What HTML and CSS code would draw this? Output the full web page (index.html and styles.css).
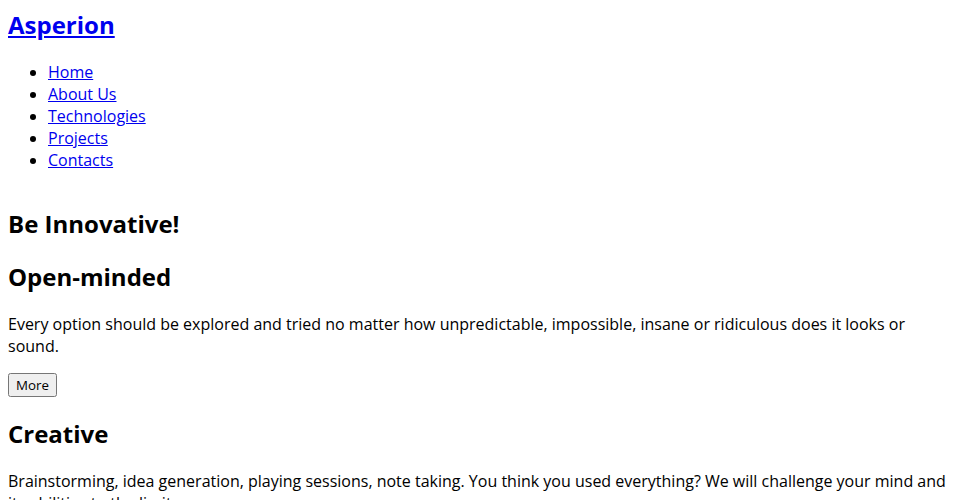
FILE: index.html
```html
<!DOCTYPE html>
<html lang="en">
<head>
    <meta charset="UTF-8">
    <meta name="viewport" content="width=device-width, initial-scale=1.0">
    <title>Asperion</title>
    <link rel="stylesheet" href="styles.css">
</head>
<body>
    <header class="header">
        <h1 class="logo"><a href="#">Asperion</a></h1>
        <nav class="nav">
            <ul>
                <li><a href="#">Home</a></li>
                <li><a href="#">About Us</a></li>
                <li><a href="#">Technologies</a></li>
                <li><a href="#">Projects</a></li>
                <li><a href="#">Contacts</a></li>
            </ul>
        </nav>
    </header>

    <main class="content">
        <h2 class="motto">Be Innovative!</h2>

        <section class="feature">
            <h3 class="feature-title">Open-minded</h3>
            <p>Every option should be explored and tried no matter how unpredictable, impossible, insane or ridiculous does it looks or sound.</p>
            <button class="btn">More</button>
        </section>

        <section class="feature">
            <h3 class="feature-title">Creative</h3>
            <p>Brainstorming, idea generation, playing sessions, note taking. You think you used everything? We will challenge your mind and its abilities to the limits.</p>
            <button class="btn">More</button>
        </section>
    </main>
</body>
</html>
```

FILE: styles.css
```css
body {
    margin: 8px;
    font-family: 'Open Sans', sans-serif;
    font-size: 16px;
    color: #000;
}

a {
    color: #0000ee;
}

.logo {
    font-size: 24px;
    margin: 0;
}

.nav ul {
    margin: 20px 0 16px;
    padding-left: 40px;
}

.motto {
    font-size: 24px;
    margin: 36px 0 20px;
}

.feature-title {
    font-size: 24px;
    margin: 20px 0;
}

.feature p {
    margin: 16px 0;
}

.btn {
    font-family: 'Open Sans', sans-serif;
    font-size: 13.333px;
}
```
